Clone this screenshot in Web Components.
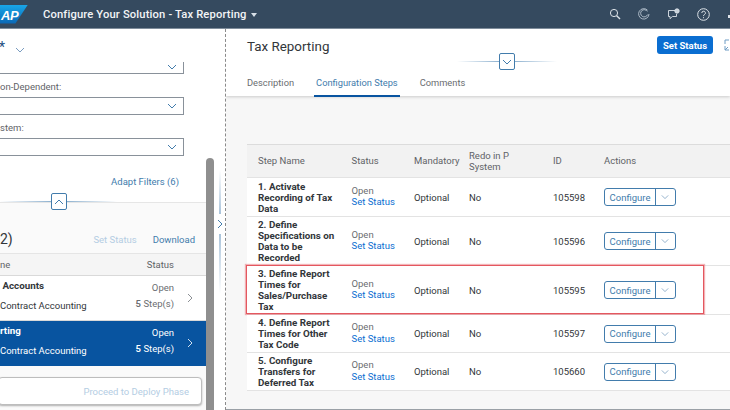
<!DOCTYPE html>
<html lang="en">
<head>
<meta charset="utf-8">
<title>Configure Your Solution</title>
<style>
  html, body { margin: 0; height: 100%; overflow: hidden; background: #fff; }
  body { font-family: Roboto, "Liberation Sans", sans-serif; font-size: 9.5px; color: #32363a; }
</style>
</head>
<body>
<app-page></app-page>
<script>
const CHEVRON_DOWN = `<svg width="10" height="6" viewBox="0 0 10 6"><path d="M1 1l4 4 4-4" fill="none" stroke="currentColor" stroke-width="1"/></svg>`;
const CHEVRON_UP = `<svg width="10" height="6" viewBox="0 0 10 6"><path d="M1 5l4-4 4 4" fill="none" stroke="currentColor" stroke-width="1"/></svg>`;
const CHEVRON_RIGHT = `<svg width="6" height="10" viewBox="0 0 6 10"><path d="M1 1l4 4-4 4" fill="none" stroke="currentColor" stroke-width="1"/></svg>`;

class ShellBar extends HTMLElement {
    constructor() {
        super();
        this.attachShadow({ mode: "open" });
    }
    connectedCallback() {
        this.shadowRoot.innerHTML = `
        <style>
            :host { display: flex; align-items: center; height: 28px; background: #354a5f; border-bottom: 1px solid #7f8d9b; color: #fff; overflow: hidden; }
            #logo { width: 28px; height: 19px; background: linear-gradient(180deg, #19a6e8, #0a67b5); clip-path: polygon(0 0, 100% 0, 55% 100%, 0 100%); font: italic bold 13px/22px "Liberation Sans", sans-serif; letter-spacing: -.5px; padding-left: 1px; box-sizing: border-box; }
            #title { margin-left: 15px; font-size: 11.2px; font-weight: 500; letter-spacing: .15px; color: #f3f5f7; }
            #caret { margin: 1px 0 0 4px; width: 0; height: 0; border: 3px solid transparent; border-top: 4px solid #d8e0e8; border-bottom: 0; }
            #icons { margin-left: auto; display: flex; align-items: center; gap: 17px; margin-right: -5px; color: #dde3e9; }
            svg { display: block; flex: none; }
        </style>
        <div id="logo">AP</div>
        <div id="title">Configure Your Solution - Tax Reporting</div>
        <div id="caret"></div>
        <div id="icons">
            <svg width="12" height="12" viewBox="0 0 12 12" fill="none" stroke="currentColor"><circle cx="5" cy="5" r="3.6"/><path d="M7.7 7.7L11 11" stroke-width="1.4"/></svg>
            <svg width="12" height="12" viewBox="0 0 12 12" fill="none" stroke="#b9c5d1" stroke-width=".9"><path d="M9.5 2.2A5.2 5.2 0 1 0 11 6"/><path d="M9.3 3.4A3.6 3.6 0 1 0 9.6 6.6"/></svg>
            <svg width="13" height="12" viewBox="0 0 13 12" fill="none" stroke="currentColor" stroke-width=".9"><path d="M8 2.5H1.5v6H3v2.2l2.4-2.2H9.5V6"/><circle cx="10" cy="3" r="2.2" fill="#c9d2db"/></svg>
            <svg width="13" height="13" viewBox="0 0 13 13" fill="none" stroke="currentColor"><circle cx="6.5" cy="6.5" r="5.8"/><path d="M4.8 5a1.8 1.8 0 1 1 2.6 1.6c-.6.3-.9.7-.9 1.5"/><path d="M6.5 9.2v1"/></svg>
            <svg width="8" height="12" viewBox="0 0 8 12" fill="currentColor"><path d="M1 7h6v3H1z"/></svg>
        </div>`;
    }
}

class FilterSelect extends HTMLElement {
    constructor() {
        super();
        this.attachShadow({ mode: "open" });
    }
    connectedCallback() {
        this.shadowRoot.innerHTML = `
        <style>
            :host { display: flex; align-items: center; justify-content: flex-end; box-sizing: border-box; width: 185px; height: 18px; margin-left: -1px; border: 1px solid #89919a; border-left: 0; background: #fff; color: #427cac; padding-right: 6px; }
            :host([cut]) { height: 12px; border-top: 0; align-items: flex-start; padding-top: 2px; }
            svg { display: block; }
        </style>
        ${CHEVRON_DOWN}`;
    }
}

class CollapseHandle extends HTMLElement {
    constructor() {
        super();
        this.attachShadow({ mode: "open" });
    }
    connectedCallback() {
        const icon = this.getAttribute("dir-icon") === "up" ? CHEVRON_UP : CHEVRON_DOWN;
        this.shadowRoot.innerHTML = `
        <style>
            :host { display: flex; align-items: center; height: 17px; }
            .line { height: 1px; background: linear-gradient(90deg, transparent, #8fb2d0); }
            .line.after { background: linear-gradient(90deg, #8fb2d0, transparent); }
            button { box-sizing: border-box; width: 16px; height: 17px; padding: 0; display: flex; align-items: center; justify-content: center; background: #fff; border: 1px solid #427cac; border-radius: 2px; color: #427cac; }
            #before { width: var(--before, 40px); }
            #after { width: var(--after, 40px); }
        </style>
        <div class="line" id="before"></div>
        <button type="button">${icon}</button>
        <div class="line after" id="after"></div>`;
    }
}

class StatusItem extends HTMLElement {
    constructor() {
        super();
        this.attachShadow({ mode: "open" });
    }
    connectedCallback() {
        this.shadowRoot.innerHTML = `
        <style>
            :host { display: grid; grid-template-columns: 1fr auto 32px; box-sizing: border-box; height: 45px; padding: 3px 0 0 0; background: #fff; border-bottom: 1px solid #d9d9d9; color: #32363a; }
            :host([selected]) { background: #0854a0; color: #fff; border-bottom-color: #0854a0; }
            #name { font-weight: 700; font-size: 9.8px; line-height: 14px; white-space: nowrap; }
            #sub { line-height: 14px; margin-top: 6px; white-space: nowrap; }
            #right { text-align: right; line-height: 14px; color: #6a6d70; }
            :host([selected]) #right { color: #fff; }
            #steps { margin-top: 2px; }
            b { font-weight: 600; }
            #arrow { display: flex; align-items: center; justify-content: center; padding-bottom: 4px; color: #8c9095; }
            :host([selected]) #arrow { color: #cfe0f0; }
            svg { display: block; }
        </style>
        <div>
            <div id="name"><slot name="name"></slot></div>
            <div id="sub"><slot name="sub"></slot></div>
        </div>
        <div id="right">
            <div style="margin-top:2px">Open</div>
            <div id="steps"><b>5</b> Step(s)</div>
        </div>
        <div id="arrow">${CHEVRON_RIGHT}</div>`;
    }
}

class LeftPane extends HTMLElement {
    constructor() {
        super();
        this.attachShadow({ mode: "open" });
    }
    connectedCallback() {
        this.shadowRoot.innerHTML = `
        <style>
            :host { display: flex; flex: 0 0 226px; box-sizing: border-box; height: 381px; border-right: 1px dashed #8a8a8a; overflow: hidden; }
            #main { flex: 0 0 206px; display: flex; flex-direction: column; min-width: 0; }
            #filters { height: 165px; padding-top: 7px; box-sizing: content-box; }
            #variant { display: flex; align-items: center; height: 26px; font-size: 14px; gap: 10px; }
            #variant span { margin: -5px 0 0 -1px; color: #1d4f82; line-height: 14px; }
            #variant svg { margin-top: 2px; color: #7a9cc0; }
            label { display: block; line-height: 14px; color: #5f6367; margin: 6px 0 3px; white-space: nowrap; }
            #adapt { text-align: right; padding: 19px 27px 0 0; color: #427cac; line-height: 14px; }
            collapse-handle { --before: 51px; --after: 50px; margin-top: -8px; position: relative; z-index: 1; }
            #list { flex: 1; margin-top: -8px; background: #fafafa; border-top: 1px solid #e6e6e6; display: flex; flex-direction: column; }
            #toolbar { display: flex; align-items: center; height: 50px; padding-top: 22px; box-sizing: border-box; padding-right: 11px; }
            #count { font-size: 14px; color: #32363a; margin-right: auto; }
            #dim { color: #b4cde3; margin-right: 16px; }
            #download { color: #427cac; }
            #head { display: flex; justify-content: space-between; align-items: center; height: 22px; box-sizing: border-box; background: #f5f5f5; border-top: 1px solid #e5e5e5; padding: 0 32px 0 0; color: #5f6367; }
            #items { border-top: 1px solid #d9d9d9; }
            #foot { padding-top: 11px; }
            #proceed { box-sizing: border-box; display: flex; justify-content: flex-end; align-items: center; width: 204px; height: 28px; margin-left: -2px; padding-right: 12px; background: #fff; border: 1px solid #bdbdbd; border-radius: 4px; box-shadow: 0 1px 2px rgba(0,0,0,.3); color: #b4cde3; }
            #scroll { flex: 0 0 8px; margin-top: 129px; background: #8f8f8f; border-radius: 4px 4px 0 0; }
            #splitter { flex: 0 0 11px; display: flex; flex-direction: column; align-items: center; padding-top: 141px; color: #427cac; }
            .bar { width: 2px; background: linear-gradient(180deg, transparent, #a9c3da); }
            #b1 { height: 44px; }
            #b2 { height: 60px; background: linear-gradient(180deg, #a9c3da, transparent); }
            #splitter svg { margin: 5px 0; display: block; }
        </style>
        <div id="main">
            <div id="filters">
                <div id="variant"><span>*</span>${CHEVRON_DOWN}</div>
                <filter-select cut></filter-select>
                <label>on-Dependent:</label>
                <filter-select></filter-select>
                <label>stem:</label>
                <filter-select></filter-select>
                <div id="adapt">Adapt Filters (6)</div>
            </div>
            <collapse-handle dir-icon="up"></collapse-handle>
            <div id="list">
                <div id="toolbar"><span id="count">2)</span><span id="dim">Set Status</span><span id="download">Download</span></div>
                <div id="head"><span>ne</span><span>Status</span></div>
                <div id="items">
                    <status-item><span slot="name">&nbsp;Accounts</span><span slot="sub">Contract Accounting</span></status-item>
                    <status-item selected><span slot="name">rting</span><span slot="sub">Contract Accounting</span></status-item>
                </div>
                <div id="foot"><div id="proceed">Proceed to Deploy Phase</div></div>
            </div>
        </div>
        <div id="scroll"></div>
        <div id="splitter"><div class="bar" id="b1"></div>${CHEVRON_RIGHT}<div class="bar" id="b2"></div></div>`;
    }
}

class SplitAction extends HTMLElement {
    constructor() {
        super();
        this.attachShadow({ mode: "open" });
    }
    connectedCallback() {
        this.shadowRoot.innerHTML = `
        <style>
            :host { display: inline-flex; box-sizing: border-box; width: 72px; height: 18px; border: 1px solid #427cac; border-radius: 3px; color: #427cac; background: #fff; }
            #text { flex: 1; display: flex; align-items: center; justify-content: center; border-right: 1px solid #427cac; }
            #more { flex: 0 0 20px; margin-left: -1px; display: flex; align-items: center; justify-content: center; color: #7b9fc0; }
            svg { display: block; width: 8px; }
        </style>
        <div id="text">Configure</div>
        <div id="more">${CHEVRON_DOWN}</div>`;
    }
}

class StepRow extends HTMLElement {
    constructor() {
        super();
        this.attachShadow({ mode: "open" });
    }
    connectedCallback() {
        this.shadowRoot.innerHTML = `
        <style>
            :host { display: grid; grid-template-columns: 104.5px 62.5px 55px 84px 51px 1fr; align-items: center; box-sizing: border-box; position: relative; background: #fff; border-bottom: 1px solid #e3e3e3; color: #32363a; line-height: 11px; }
            #name { font-weight: 700; font-size: 9.8px; padding-left: 11px; padding-right: 8px; color: #32363a; }
            #status { line-height: 11.2px; color: #6a6d70; padding-bottom: 2px; }
            #status a { display: block; color: #0a6ed1; }
            #mark { display: none; position: absolute; box-sizing: border-box; left: -1px; top: -1px; width: 458px; bottom: 0; border: 1px solid #e4575f; box-shadow: 0 0 1px 1px rgba(228,87,95,.45); }
            :host([marked]) #mark { display: block; }
        </style>
        <div id="name"><slot></slot></div>
        <div id="status">Open<a>Set Status</a></div>
        <div>Optional</div>
        <div>No</div>
        <div>${this.getAttribute("step-id")}</div>
        <div><split-action></split-action></div>
        <div id="mark"></div>`;
    }
}

class StepsTable extends HTMLElement {
    constructor() {
        super();
        this.attachShadow({ mode: "open" });
    }
    connectedCallback() {
        this.shadowRoot.innerHTML = `
        <style>
            :host { display: block; margin: 48px 0 0 21px; }
            #head { display: grid; grid-template-columns: 104.5px 62.5px 55px 84px 51px 1fr; align-items: center; height: 34px; box-sizing: border-box; background: #f2f2f2; border-top: 1px solid #dcdcdc; border-bottom: 1px solid #e3e3e3; color: #5f6367; line-height: 11.2px; }
            #head div:first-child { padding-left: 11px; }
        </style>
        <div id="head"><div>Step Name</div><div>Status</div><div>Mandatory</div><div>Redo in P<br>System</div><div>ID</div><div>Actions</div></div>
        <slot></slot>`;
    }
}

class DetailPane extends HTMLElement {
    constructor() {
        super();
        this.attachShadow({ mode: "open" });
    }
    connectedCallback() {
        this.shadowRoot.innerHTML = `
        <style>
            :host { display: flex; flex-direction: column; flex: 1; min-width: 0; height: 381px; background: #f7f7f7; border-bottom: 1px solid #9aa0a6; box-sizing: border-box; overflow: hidden; }
            #top { background: #fff; height: 67px; box-sizing: border-box; box-shadow: 0 1px 3px rgba(0,0,0,.18); position: relative; z-index: 1; padding-left: 21px; }
            #titlebar { display: flex; align-items: center; height: 32px; }
            h1 { margin: 0; font-size: 13.4px; font-weight: 400; color: #32363a; padding-top: 3px; }
            #status-btn { margin-left: auto; box-sizing: border-box; flex: none; width: 56px; height: 18px; background: #0a6ed1; color: #fff; font-weight: 700; border-radius: 3px; display: flex; align-items: center; justify-content: center; }
            #expand { flex: none; margin: 0 -6px 0 11px; color: #6f9cc4; display: block; }
            collapse-handle { --before: 42px; --after: 42px; margin: -8px 0 0 210px; height: 17px; }
            #tabs { display: flex; gap: 18px; margin: 1px 0 0 -2px; height: 26px; font-size: 9.3px; }
            .tab { padding: 5px 2px 0; box-sizing: border-box; height: 26px; color: #6a6d70; line-height: 14px; white-space: nowrap; }
            .tab.on { color: #427cac; border-bottom: 2px solid #0854a0; }
        </style>
        <div id="top">
            <div id="titlebar">
                <h1>Tax Reporting</h1>
                <div id="status-btn">Set Status</div>
                <svg id="expand" width="12" height="12" viewBox="0 0 12 12" fill="none" stroke="currentColor"><path d="M1 5V1h4M1 7v4h4M1 11l3-3"/></svg>
            </div>
            <collapse-handle></collapse-handle>
            <div id="tabs">
                <div class="tab">Description</div>
                <div class="tab on">Configuration Steps</div>
                <div class="tab">Comments</div>
            </div>
        </div>
        <steps-table>
            <step-row step-id="105598" style="height:39px">1. Activate Recording of Tax Data</step-row>
            <step-row step-id="105596" style="height:49px">2. Define Specifications on Data to be Recorded</step-row>
            <step-row step-id="105595" style="height:49px" marked>3. Define Report Times for Sales/Purchase Tax</step-row>
            <step-row step-id="105597" style="height:38px">4. Define Report Times for Other Tax Code</step-row>
            <step-row step-id="105660" style="height:38px">5. Configure Transfers for Deferred Tax</step-row>
        </steps-table>`;
    }
}

class AppPage extends HTMLElement {
    constructor() {
        super();
        this.attachShadow({ mode: "open" });
    }
    connectedCallback() {
        this.shadowRoot.innerHTML = `
        <style>
            :host { display: block; width: 730px; height: 410px; overflow: hidden; }
            #body { display: flex; }
        </style>
        <shell-bar></shell-bar>
        <div id="body"><left-pane></left-pane><detail-pane></detail-pane></div>`;
    }
}

customElements.define("shell-bar", ShellBar);
customElements.define("filter-select", FilterSelect);
customElements.define("collapse-handle", CollapseHandle);
customElements.define("status-item", StatusItem);
customElements.define("left-pane", LeftPane);
customElements.define("split-action", SplitAction);
customElements.define("step-row", StepRow);
customElements.define("steps-table", StepsTable);
customElements.define("detail-pane", DetailPane);
customElements.define("app-page", AppPage);
</script>
</body>
</html>
